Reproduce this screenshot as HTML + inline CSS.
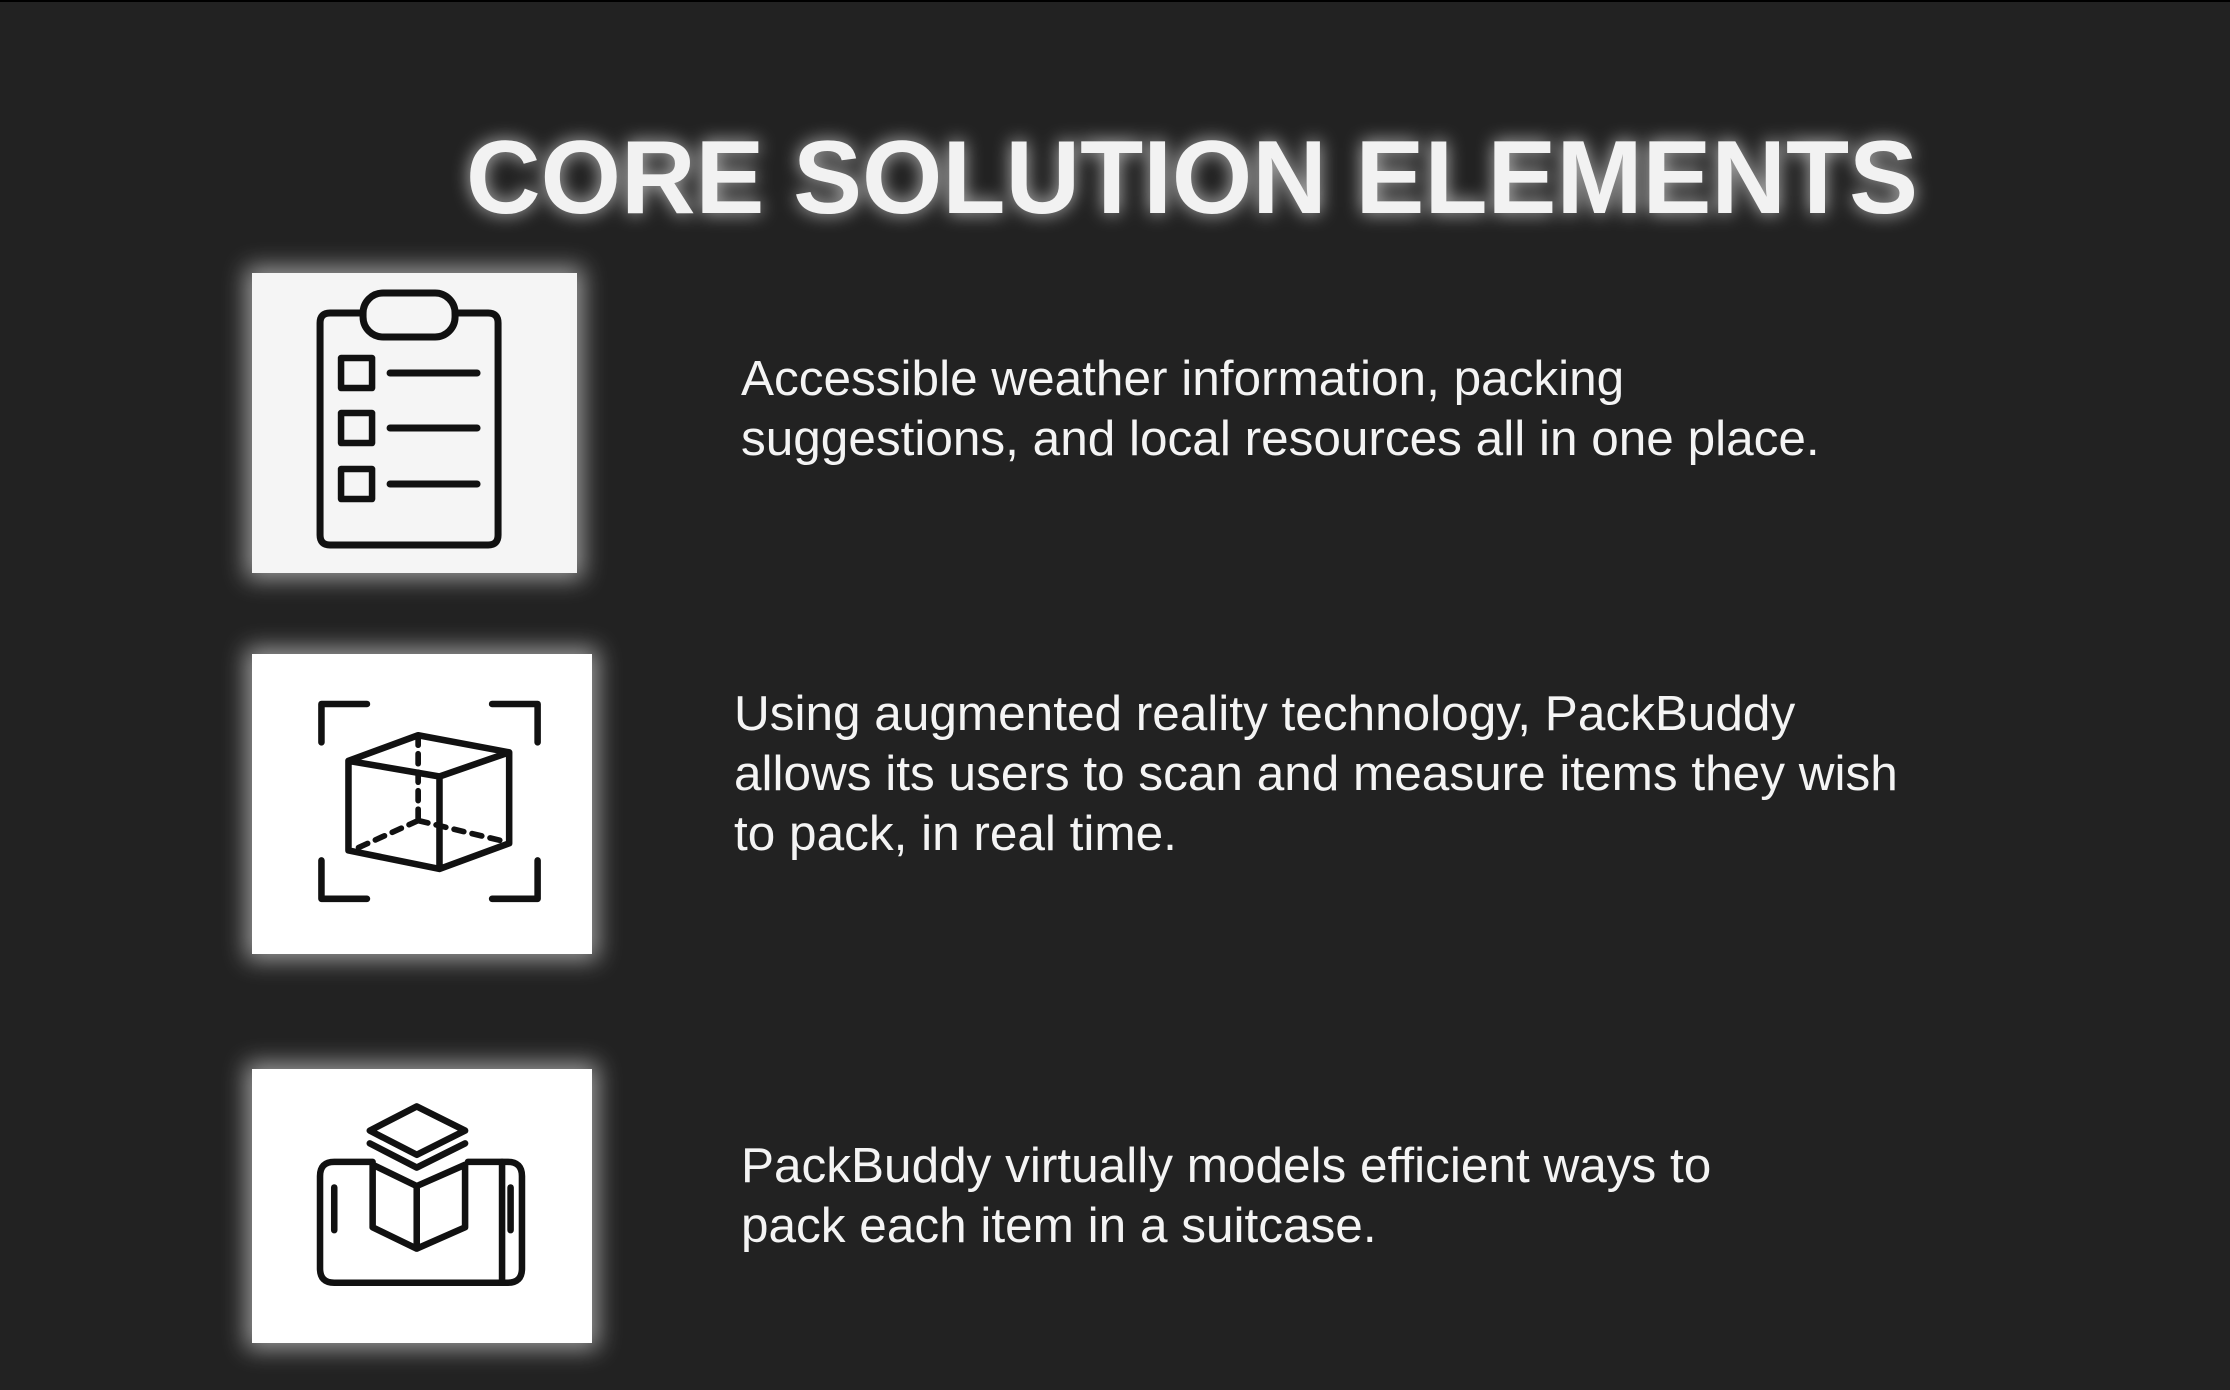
<!DOCTYPE html>
<html><head><meta charset="utf-8"><style>
html,body{margin:0;padding:0;}
body{width:2230px;height:1390px;background:#222222;position:relative;overflow:hidden;font-family:"Liberation Sans",Arial,sans-serif;}
.topline{position:absolute;left:0;top:0;width:2230px;height:2px;background:#000;}
.box{position:absolute;box-shadow:0 0 22px 6px rgba(255,255,255,0.55);}
.t{position:absolute;color:#f4f4f4;font-size:49.5px;line-height:60px;white-space:nowrap;}
svg{position:absolute;left:0;top:0;}
</style></head><body>
<div class="topline"></div>
<div class="box" style="left:252px;top:273px;width:325px;height:300px;background:#f5f5f5"></div>
<div class="box" style="left:252px;top:654px;width:340px;height:300px;background:#fff"></div>
<div class="box" style="left:252px;top:1069px;width:340px;height:274px;background:#fff"></div>

<svg width="2230" height="1390" viewBox="0 0 2230 1390">
  <defs><filter id="g" x="-10%" y="-50%" width="120%" height="200%"><feGaussianBlur stdDeviation="9"/></filter></defs>
  <text x="1192" y="213" text-anchor="middle" font-family="Liberation Sans, Arial, sans-serif" font-weight="bold" font-size="104" textLength="1452" lengthAdjust="spacingAndGlyphs" fill="#fff" filter="url(#g)" opacity="0.7">CORE SOLUTION ELEMENTS</text>
  <text x="1192" y="213" text-anchor="middle" font-family="Liberation Sans, Arial, sans-serif" font-weight="bold" font-size="104" textLength="1452" lengthAdjust="spacingAndGlyphs" fill="#f2f2f2">CORE SOLUTION ELEMENTS</text>
</svg>

<svg width="2230" height="1390" viewBox="0 0 1568 977.4" fill="none" stroke="#111" stroke-width="4.6" stroke-linecap="round" stroke-linejoin="round">
  <g transform="scale(0.7032)" stroke-width="7">
    <path d="M363 313 H330 Q320 313 320 323 V535 Q320 545 330 545 H488 Q498 545 498 535 V323 Q498 313 488 313 H455"/>
    <rect x="363" y="293" width="92" height="44" rx="20"/>
    <rect x="341" y="358" width="31" height="30" stroke-width="6.5"/>
    <rect x="341" y="413" width="31" height="30" stroke-width="6.5"/>
    <rect x="341" y="469" width="31" height="30" stroke-width="6.5"/>
    <path d="M390 373 H477 M390 428 H477 M390 484 H477"/>
  </g>
  <path d="M226 522 V495 H258 M346 495 H378 V522 M226 605 V632 H258 M346 632 H378 V605"/>
  <path d="M245 535 L294 517 L358 529 L309 546 Z M245 535 V598 L309 611 L358 593 V529 M309 546 V611"/>
  <path d="M294 517 V577 M294 577 L252 596 M294 577 L352 591" stroke-dasharray="7 6" stroke-width="4"/>
  <path d="M262 817 H235 Q225 817 225 827 V892 Q225 902 235 902 H357 Q367 902 367 892 V827 Q367 817 357 817 H329"/>
  <path d="M353 817 V902 M235 835 V865 M359 835 V865"/>
  <path d="M293 778 L327 795 L293 812 L260 795 Z"/>
  <path d="M260 804 L293 821 L327 804"/>
  <path d="M262 819 L293 834 L327 819 V863 L293 878 L262 863 Z M293 834 V878"/>
</svg>

<div class="t" style="left:741px;top:349px">Accessible weather information, packing<br>suggestions, and local resources all in one place.</div>
<div class="t" style="left:734px;top:684px">Using augmented reality technology, PackBuddy<br>allows its users to scan and measure items they wish<br>to pack, in real time.</div>
<div class="t" style="left:741px;top:1136px">PackBuddy virtually models efficient ways to<br>pack each item in a suitcase.</div>
</body></html>
